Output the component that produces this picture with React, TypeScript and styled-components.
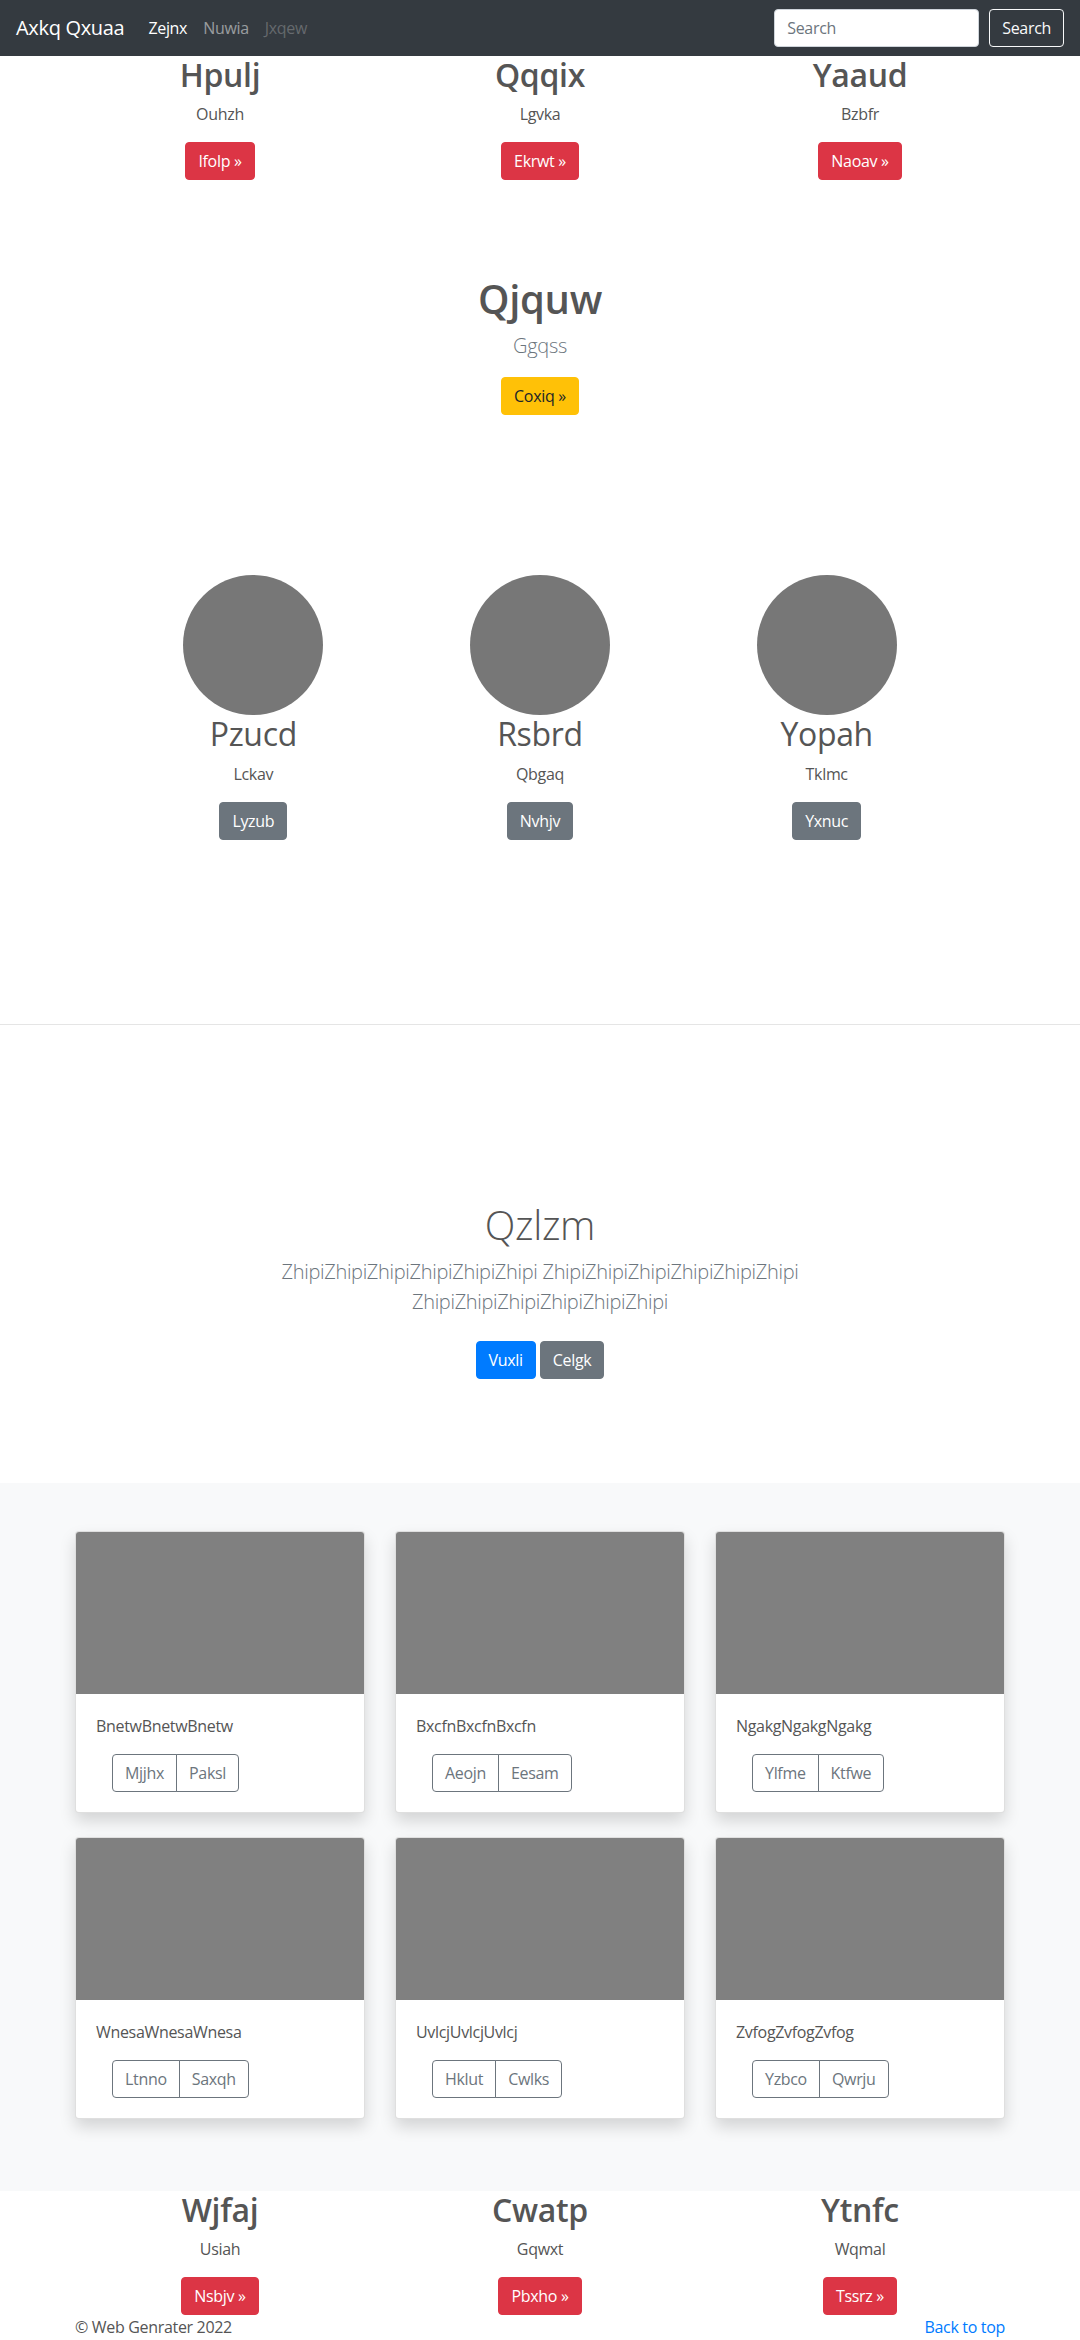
import React from 'react';
import styled, { createGlobalStyle, css } from 'styled-components';

const GlobalStyle = createGlobalStyle`
  *, *::before, *::after { box-sizing: border-box; }
  html, body { margin: 0; padding: 0; }
  body {
    font-family: "Open Sans", "Segoe UI", Roboto, Arial, sans-serif;
    font-size: 16px;
    line-height: 1.5;
    letter-spacing: -0.02em;
    color: #555;
    background: #fff;
  }
`;

type Variant = 'danger' | 'warning' | 'secondary' | 'primary' | 'outlineSecondary';

const variants: Record<Variant, ReturnType<typeof css>> = {
  danger: css`background: #dc3545; border-color: #dc3545; color: #fff;`,
  warning: css`background: #ffc107; border-color: #ffc107; color: #212529;`,
  secondary: css`background: #6c757d; border-color: #6c757d; color: #fff;`,
  primary: css`background: #007bff; border-color: #007bff; color: #fff;`,
  outlineSecondary: css`background: transparent; border-color: #6c757d; color: #6c757d;`,
};

/* ---------- Navbar ---------- */
const Navbar = styled.nav`
  display: flex;
  align-items: center;
  height: 56px;
  padding: 8px 16px;
  background: #343a40;
`;

const Brand = styled.a`
  font-size: 20px;
  line-height: 30px;
  padding: 5px 0;
  margin-right: 16px;
  color: #fff;
  text-decoration: none;
  white-space: nowrap;
`;

const NavList = styled.ul`
  display: flex;
  flex: 1;
  list-style: none;
  margin: 0;
  padding: 0;
`;

const NavLink = styled.a<{ $state: 'active' | 'normal' | 'disabled' }>`
  display: block;
  padding: 8px;
  color: ${(p) =>
    p.$state === 'active' ? '#fff' : p.$state === 'normal' ? 'rgba(255,255,255,.5)' : 'rgba(255,255,255,.25)'};
  text-decoration: none;
`;

const SearchForm = styled.form`
  display: flex;
  align-items: center;
  gap: 10px;
`;

const SearchInput = styled.input`
  width: 205px;
  height: 38px;
  padding: 6px 12px;
  font-family: inherit;
  font-size: 16px;
  letter-spacing: inherit;
  color: #495057;
  background: #fff;
  border: 1px solid #ced4da;
  border-radius: 4px;
  &::placeholder { color: #6c757d; }
`;

const SearchButton = styled.button`
  height: 38px;
  padding: 6px 12px;
  font-family: inherit;
  font-size: 16px;
  letter-spacing: inherit;
  line-height: 24px;
  color: #f8f9fa;
  background: transparent;
  border: 1px solid #f8f9fa;
  border-radius: 4px;
`;

/* ---------- Shared ---------- */
const Container = styled.div<{ $width?: number }>`
  width: ${(p) => p.$width ?? 930}px;
  margin: 0 auto;
`;

const ThreeCols = styled.div`
  display: grid;
  grid-template-columns: repeat(3, 1fr);
  column-gap: 30px;
`;

const Btn = styled.a<{ $variant: Variant }>`
  display: inline-block;
  padding: 6px 12px;
  font-size: 16px;
  line-height: 24px;
  border: 1px solid transparent;
  border-radius: 4px;
  text-decoration: none;
  white-space: nowrap;
  ${(p) => variants[p.$variant]}
`;

const Text = styled.p<{ $mb?: number }>`
  margin: 0 0 ${(p) => p.$mb ?? 16}px;
`;

/* ---------- Feature columns ---------- */
const FeatureSection = styled.section<{ $top?: number }>`
  padding-top: ${(p) => p.$top ?? 0}px;
`;

const FeatureCol = styled.div`
  text-align: center;
`;

const ColTitle = styled.h2<{ $weight?: number }>`
  font-size: 32px;
  line-height: 1.2;
  font-weight: ${(p) => p.$weight ?? 600};
  margin: 0 0 8px;
`;

/* ---------- Highlight ---------- */
const Highlight = styled.section`
  padding-top: 79px;
  text-align: center;
`;

const HighlightTitle = styled.h1`
  font-size: 40px;
  line-height: 1.2;
  font-weight: 600;
  margin: 0 0 8px;
`;

const Lead = styled.p<{ $mb?: number }>`
  font-size: 20px;
  line-height: 1.5;
  font-weight: 300;
  color: #6c757d;
  margin: 0 0 ${(p) => p.$mb ?? 16}px;
`;

/* ---------- Marketing ---------- */
const Marketing = styled.section`
  padding-top: 144px;
`;

const MarketingRow = styled.div`
  display: grid;
  grid-template-columns: repeat(3, 1fr);
`;

const Avatar = styled.div`
  width: 140px;
  height: 140px;
  border-radius: 50%;
  background: #777;
  margin: 0 auto;
`;

const Divider = styled.hr`
  margin: 168px 0 80px;
  border: 0;
  border-top: 1px solid #e5e5e5;
  height: 0;
`;

/* ---------- Jumbotron ---------- */
const Jumbotron = styled.section`
  padding: 96px 0;
  text-align: center;
`;

const JumboTitle = styled.h1`
  font-size: 40px;
  line-height: 1.2;
  font-weight: 300;
  margin: 0 0 8px;
`;

const JumboActions = styled.div`
  display: flex;
  justify-content: center;
  gap: 4px;
  padding: 8px 0;
`;

/* ---------- Album ---------- */
const Album = styled.section`
  background: #f8f9fa;
  padding: 48px 0;
`;

const CardGrid = styled.div`
  display: grid;
  grid-template-columns: repeat(3, 1fr);
  gap: 24px 30px;
  padding-bottom: 24px;
`;

const Card = styled.div`
  background: #fff;
  border: 1px solid rgba(0, 0, 0, 0.125);
  border-radius: 4px;
  box-shadow: 0 8px 16px rgba(0, 0, 0, 0.15);
  overflow: hidden;
`;

const CardImage = styled.div`
  aspect-ratio: 16 / 9;
  background: #808080;
`;

const CardBody = styled.div`
  padding: 20px;
`;

const BtnGroup = styled.div`
  display: inline-flex;
  margin-left: 16px;
  & > a:first-child { border-top-right-radius: 0; border-bottom-right-radius: 0; }
  & > a:last-child { border-top-left-radius: 0; border-bottom-left-radius: 0; margin-left: -1px; }
`;

/* ---------- Footer ---------- */
const Footer = styled.footer`
  line-height: 24px;
`;

const FooterInner = styled.div`
  display: flex;
  justify-content: space-between;
`;

const FooterLink = styled.a`
  color: #007bff;
  text-decoration: none;
`;

const topCols = [
  { t: 'Hpulj', s: 'Ouhzh', b: 'Ifolp' },
  { t: 'Qqqix', s: 'Lgvka', b: 'Ekrwt' },
  { t: 'Yaaud', s: 'Bzbfr', b: 'Naoav' },
];

const marketing = [
  { t: 'Pzucd', s: 'Lckav', b: 'Lyzub' },
  { t: 'Rsbrd', s: 'Qbgaq', b: 'Nvhjv' },
  { t: 'Yopah', s: 'Tklmc', b: 'Yxnuc' },
];

const cards = [
  { t: 'BnetwBnetwBnetw', a: 'Mjjhx', b: 'Paksl' },
  { t: 'BxcfnBxcfnBxcfn', a: 'Aeojn', b: 'Eesam' },
  { t: 'NgakgNgakgNgakg', a: 'Ylfme', b: 'Ktfwe' },
  { t: 'WnesaWnesaWnesa', a: 'Ltnno', b: 'Saxqh' },
  { t: 'UvlcjUvlcjUvlcj', a: 'Hklut', b: 'Cwlks' },
  { t: 'ZvfogZvfogZvfog', a: 'Yzbco', b: 'Qwrju' },
];

const bottomCols = [
  { t: 'Wjfaj', s: 'Usiah', b: 'Nsbjv' },
  { t: 'Cwatp', s: 'Gqwxt', b: 'Pbxho' },
  { t: 'Ytnfc', s: 'Wqmal', b: 'Tssrz' },
];

const zhipi = 'Zhipi'.repeat(6);

export default function App() {
  return (
    <>
      <GlobalStyle />
      <Navbar>
        <Brand href="#">Axkq Qxuaa</Brand>
        <NavList>
          <li><NavLink $state="active" href="#">Zejnx</NavLink></li>
          <li><NavLink $state="normal" href="#">Nuwia</NavLink></li>
          <li><NavLink $state="disabled" href="#">Jxqew</NavLink></li>
        </NavList>
        <SearchForm onSubmit={(e) => e.preventDefault()}>
          <SearchInput type="search" placeholder="Search" />
          <SearchButton type="submit">Search</SearchButton>
        </SearchForm>
      </Navbar>

      <FeatureSection>
        <Container>
          <ThreeCols>
            {topCols.map((c) => (
              <FeatureCol key={c.t}>
                <ColTitle>{c.t}</ColTitle>
                <Text>{c.s}</Text>
                <Text><Btn $variant="danger" href="#">{c.b} »</Btn></Text>
              </FeatureCol>
            ))}
          </ThreeCols>
        </Container>
      </FeatureSection>

      <Highlight>
        <HighlightTitle>Qjquw</HighlightTitle>
        <Lead>Ggqss</Lead>
        <Text><Btn $variant="warning" href="#">Coxiq »</Btn></Text>
      </Highlight>

      <Marketing>
        <Container $width={860}>
          <MarketingRow>
            {marketing.map((c) => (
              <FeatureCol key={c.t}>
                <Avatar />
                <ColTitle $weight={400}>{c.t}</ColTitle>
                <Text>{c.s}</Text>
                <Text><Btn $variant="secondary" href="#">{c.b}</Btn></Text>
              </FeatureCol>
            ))}
          </MarketingRow>
        </Container>
      </Marketing>

      <Divider />

      <Jumbotron>
        <Container $width={610}>
          <JumboTitle>Qzlzm</JumboTitle>
          <Lead>{zhipi} {zhipi} {zhipi}</Lead>
          <JumboActions>
            <Btn $variant="primary" href="#">Vuxli</Btn>
            <Btn $variant="secondary" href="#">Celgk</Btn>
          </JumboActions>
        </Container>
      </Jumbotron>

      <Album>
        <Container>
          <CardGrid>
            {cards.map((c) => (
              <Card key={c.t}>
                <CardImage />
                <CardBody>
                  <Text>{c.t}</Text>
                  <BtnGroup>
                    <Btn $variant="outlineSecondary" href="#">{c.a}</Btn>
                    <Btn $variant="outlineSecondary" href="#">{c.b}</Btn>
                  </BtnGroup>
                </CardBody>
              </Card>
            ))}
          </CardGrid>
        </Container>
      </Album>

      <FeatureSection>
        <Container>
          <ThreeCols>
            {bottomCols.map((c) => (
              <FeatureCol key={c.t}>
                <ColTitle>{c.t}</ColTitle>
                <Text>{c.s}</Text>
                <Text $mb={0}><Btn $variant="danger" href="#">{c.b} »</Btn></Text>
              </FeatureCol>
            ))}
          </ThreeCols>
        </Container>
      </FeatureSection>

      <Footer>
        <Container>
          <FooterInner>
            <span>© Web Genrater 2022</span>
            <FooterLink href="#">Back to top</FooterLink>
          </FooterInner>
        </Container>
      </Footer>
    </>
  );
}
